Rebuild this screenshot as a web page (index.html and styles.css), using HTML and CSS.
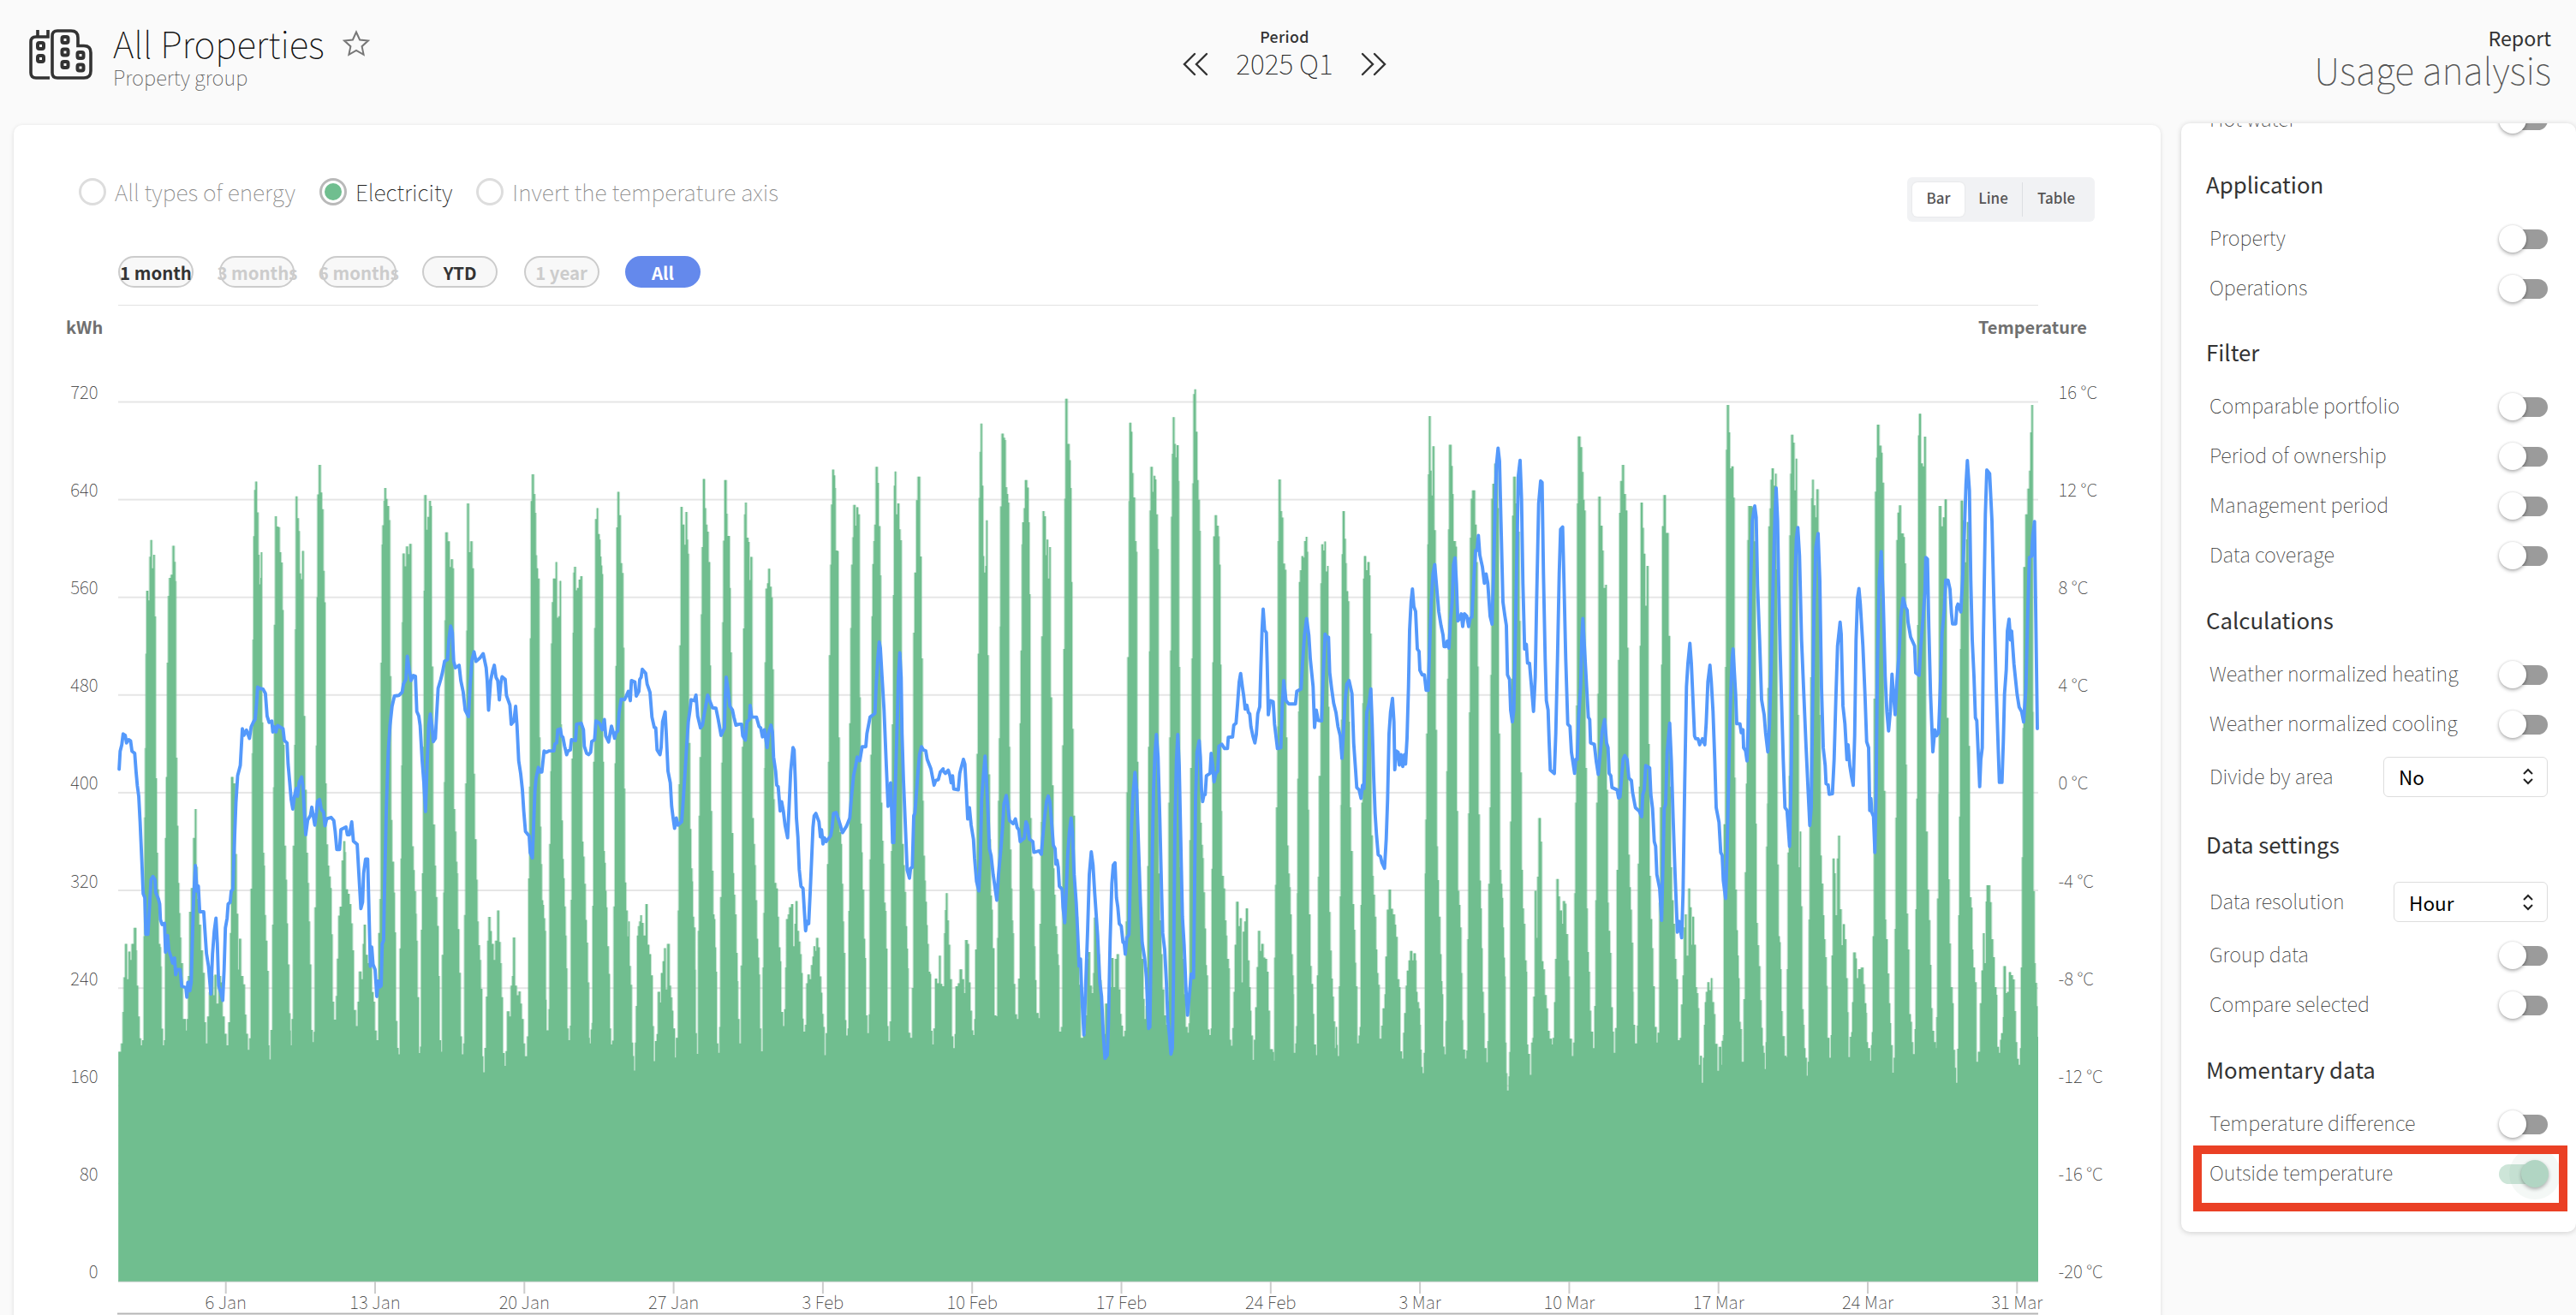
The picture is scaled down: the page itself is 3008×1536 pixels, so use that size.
FILE: index.html
```html
<!DOCTYPE html>
<html lang="en">
<head>
<meta charset="utf-8">
<title>Usage analysis</title>
<link rel="stylesheet" href="styles.css">
</head>
<body>
<header class="topbar">
  <div class="brand">
    <svg class="brand-icon" viewBox="0 0 74 60" fill="none" stroke="#333" stroke-width="3.6">
      <path d="M24 58H8q-6 0-6-6V16q0-6 6-6h14V2M10 9V2"/>
      <path d="M33 3h16q8 0 8 8v9.500h7q8 0 8 8v21.500q0 8-8 8H33q-6 0-6-6V9q0-6 6-6z"/>
      <g stroke-width="4"><rect x="10" y="17" width="7" height="7" rx="2"/><rect x="10" y="32" width="7" height="7" rx="2"/><rect x="38.500" y="10" width="7" height="7" rx="2"/><rect x="38.500" y="24.500" width="7" height="7" rx="2"/><rect x="38.500" y="39" width="7" height="7" rx="2"/><rect x="56.500" y="28" width="7" height="7" rx="2"/><rect x="56.500" y="42.500" width="7" height="7" rx="2"/></g>
    </svg>
    <div>
      <div class="title-row"><h1 class="title">All Properties</h1>
        <svg class="star" viewBox="0 0 32 32" fill="none" stroke="#777" stroke-width="2"><path d="M16 2.500l4.100 9 9.700 1.100-7.200 6.600 2 9.700-8.600-4.900-8.600 4.900 2-9.700-7.200-6.600 9.700-1.100z"/></svg>
      </div>
      <div class="subtitle">Property group</div>
    </div>
  </div>
  <div class="period">
    <div class="period-label">Period</div>
    <div class="period-row">
      <svg class="chev" viewBox="0 0 30 28"><path d="M14 2L2 14l12 12M28 2L16 14l12 12"/></svg>
      <span class="period-value">2025 Q1</span>
      <svg class="chev" viewBox="0 0 30 28"><path d="M2 2l12 12L2 26M16 2l12 12-12 12"/></svg>
    </div>
  </div>
  <div class="report">
    <div class="report-label">Report</div>
    <div class="report-name">Usage analysis</div>
  </div>
</header>
<main class="content">
  <section class="card">
    <div class="options">
      <div class="radios">
        <label class="radio"><i class="dot"></i><span>All types of energy</span></label>
        <label class="radio checked"><i class="dot"></i><span>Electricity</span></label>
        <label class="radio"><i class="dot"></i><span>Invert the temperature axis</span></label>
      </div>
      <div class="views"><span class="view active">Bar</span><span class="view line">Line</span><span class="view table">Table</span></div>
    </div>
    <div class="ranges">
      <span class="range">1 month</span><span class="range off">3 months</span><span class="range off">6 months</span><span class="range">YTD</span><span class="range off">1 year</span><span class="range on">All</span>
    </div>
    <svg class="chart" id="chart" viewBox="16 356 2507 1180" width="2507" height="1180">
      <rect x="138" y="355" width="2242" height="2" fill="#e2e2e2"/>
      <g id="grid"></g>
      <path id="fringe" fill="#70be8f" opacity=".42"/>
      <path id="bars" fill="#70be8f"/>
      <path id="temp" fill="none" stroke="#5499fb" stroke-width="3.900" stroke-linejoin="round" stroke-linecap="round"/>
      <g id="labels"></g>
      <text class="axis-title" x="77" y="390">kWh</text>
      <text class="axis-title" x="2437" y="390" text-anchor="end">Temperature</text>
      <rect x="137" y="1533.500" width="2243" height="2" fill="#b5b5b5"/>
    </svg>
  </section>
  <aside class="settings">
    <div class="scroll">
      <div class="row"><span>Hot water</span><i class="toggle"></i></div>
      <h2 class="group">Application</h2>
      <div class="row"><span>Property</span><i class="toggle"></i></div>
      <div class="row"><span>Operations</span><i class="toggle"></i></div>
      <h2 class="group">Filter</h2>
      <div class="row"><span>Comparable portfolio</span><i class="toggle"></i></div>
      <div class="row"><span>Period of ownership</span><i class="toggle"></i></div>
      <div class="row"><span>Management period</span><i class="toggle"></i></div>
      <div class="row"><span>Data coverage</span><i class="toggle"></i></div>
      <h2 class="group">Calculations</h2>
      <div class="row"><span>Weather normalized heating</span><i class="toggle"></i></div>
      <div class="row"><span>Weather normalized cooling</span><i class="toggle"></i></div>
      <div class="row tall"><span>Divide by area</span><div class="select wide">No<svg class="updown" viewBox="0 0 12 18"><path d="M1 6l5-5 5 5M1 12l5 5 5-5"/></svg></div></div>
      <h2 class="group">Data settings</h2>
      <div class="row tall"><span>Data resolution</span><div class="select">Hour<svg class="updown" viewBox="0 0 12 18"><path d="M1 6l5-5 5 5M1 12l5 5 5-5"/></svg></div></div>
      <div class="row"><span>Group data</span><i class="toggle"></i></div>
      <div class="row"><span>Compare selected</span><i class="toggle"></i></div>
      <h2 class="group">Momentary data</h2>
      <div class="row"><span>Temperature difference</span><i class="toggle"></i></div>
      <div class="row marked"><span>Outside temperature</span><i class="toggle on"></i></div>
    </div>
  </aside>
</main>
<script src="chart.js"></script>
</body>
</html>
```
FILE: styles.css
```css
*, *::before, *::after { box-sizing: border-box; }
body {
  margin: 0;
  width: 3008px;
  height: 1536px;
  overflow: hidden;
  background: #fafafa;
  color: #333;
  font-family: "Noto Sans CJK SC", "Noto Sans", sans-serif;
  font-weight: 100;
}
h1, h2 { margin: 0; font-weight: inherit; }

.topbar { height: 144px; display: grid; grid-template-columns: 1fr 1fr 1fr; }
.brand { display: flex; gap: 24px; padding: 33px 0 0 34px; }
.brand-icon { width: 74px; height: 60px; }
.title-row { display: flex; align-items: center; gap: 21px; height: 40px; margin-top: -2px; }
.title { font-size: 42.4px; line-height: 40px; color: #111; margin-top: -2px; }
.star { width: 32px; height: 32px; }
.subtitle { font-size: 23.8px; line-height: 37px; color: #555; }
.period { display: flex; flex-direction: column; align-items: center; padding: 26px 0 0 0; margin-left: -8px; }
.period-label { font-size: 17.8px; line-height: 32px; font-weight: 500; letter-spacing: .3px; }
.period-row { display: flex; align-items: center; justify-content: space-between; width: 238px; height: 34px; }
.period-value { font-size: 32px; line-height: 34px; color: #222; margin-top: -4px; }
.chev { width: 30px; height: 28px; fill: none; stroke: #333; stroke-width: 2.4; stroke-linecap: round; }
.report { text-align: right; padding: 26px 29px 0 0; }
.report-label { font-size: 23.2px; line-height: 36px; font-weight: 400; }
.report-name { font-size: 43px; line-height: 36px; color: #555; }

.content { display: flex; align-items: flex-start; padding-left: 16px; gap: 24px; }
.card {
  width: 2507px; height: 1400px; margin-top: 2px;
  background: #fff; border-radius: 10px;
  box-shadow: 0 1px 5px rgba(0, 0, 0, .13);
}
.options { display: flex; justify-content: space-between; padding: 61px 77px 0 76px; height: 153px; }
.radios { display: flex; height: 34px; align-items: center; gap: 28px; }
.radio { display: flex; align-items: center; gap: 10px; font-size: 26.5px; line-height: 34px; color: #888; white-space: nowrap; }
.dot { width: 32px; height: 32px; border: 3px solid #ddd; border-radius: 50%; padding: 3px; }
.checked { color: #222; }
.checked .dot { border-color: #b9b9b9; }
.checked .dot::before { content: ""; display: block; width: 20px; height: 20px; border-radius: 50%; background: #70be8f; }
.views { display: flex; width: 219px; height: 52px; padding: 6px; border-radius: 6px; background: #f1f2f4; font-size: 17px; line-height: 36px; font-weight: 500; color: #555; }
.view { display: flex; justify-content: center; width: 61px; height: 40px; }
.view.active { background: #fff; border-radius: 6px; box-shadow: 0 0 3px rgba(0, 0, 0, .08); }
.view.line { width: 68px; border-right: 1px solid #dcdee2; }
.view.table { width: 78px; }
.ranges { display: flex; gap: 30.4px; padding-left: 122px; height: 57px; }
.range {
  display: flex; align-items: center; justify-content: center;
  width: 88px; height: 37px; border: 2px solid #ccc; border-radius: 19px;
  background: #f8f8f8; font-size: 20.4px; font-weight: 700; white-space: nowrap; color: #333;
}
.off { color: #ccc; }
.range.on { background: #6489ec; border-color: #6489ec; color: #fff; }
.chart { display: block; }
.axis { font-size: 20.6px; fill: #333; }
.axis-title { font-size: 20px; font-weight: 700; fill: #707070; }

.settings {
  width: 461px; height: 1295px; overflow: hidden; position: relative;
  background: #fff; border-radius: 10px; box-shadow: 0 1px 6px rgba(0, 0, 0, .18);
}
.scroll { margin-top: -33.500px; }
.row { display: flex; justify-content: space-between; align-items: center; height: 58px; padding: 0 33px 0 33px; font-size: 23.5px; color: #333; white-space: nowrap; }
.row > span { padding-bottom: 3px; }
.row.tall { height: 66px; }
.group { height: 80.500px; padding: 28px 0 0 29px; font-size: 25.8px; line-height: 36px; font-weight: 400; }
.toggle { position: relative; width: 55px; height: 23px; border-radius: 12px; background: #9b9b9b; margin-top: 2px; }
.toggle::before {
  content: ""; position: absolute; left: -2px; top: -5px; width: 32px; height: 32px; border-radius: 50%;
  background: #fff; box-shadow: 0 2px 4px rgba(0, 0, 0, .3), 0 0 3px rgba(0, 0, 0, .12);
}
.toggle.on { width: 57px; background: #cde5d8; }
.toggle.on::before { left: 26px; background: #b1d5c3; box-shadow: 0 2px 4px rgba(0, 0, 0, .3), 0 0 0 14px rgba(112, 170, 143, .08); }
.marked { position: relative; }
.marked::after { content: ""; position: absolute; left: 14px; top: -3px; width: 437px; height: 77px; border: 10px solid #ea4025; }
.select { display: flex; align-items: center; justify-content: space-between; width: 180px; height: 47px; padding: 0 16px 0 17px; border: 1px solid #ddd; border-radius: 6px; font-size: 22.5px; font-weight: 400; color: #000; }
.select.wide { width: 192px; }
.updown { width: 12px; height: 18px; fill: none; stroke: #222; stroke-width: 2; overflow: visible; }
```
FILE: chart.js
```js
// its samples are position/level pairs in that unit.
const segments = [
  { o: [60, 360], s: [2.529, 1.3333],
    bars: `198 1158 206 1145 211 1096 214 1042 218 990 223 1045 228 1002 233 1015 237 990 244 965 250 1000 252 1055 256 1103 260 1137 264 1148 268 1140 273 978 275 793 277 685 279 538 281 440 286 455 290 387 293 361 297 405 301 384 305 480 308 732 311 848 314 905 317 990 321 995 323 1025 325 1122 329 1148 333 1140 336 825 339 730 342 552 345 448 348 420 353 415 358 370 363 395 366 425 368 700 371 806 374 895 377 942 380 980 383 1020 388 1107 397 1125 400 1107 404 1040 408 940 413 903 419 825 424 780 428 870 431 920 436 960 441 1000 447 1035 452 1112 456 1145 461 1103 466 1065 470 1040 478 1070 482 1038 487 1083 494 1040 500 1050 505 1103 511 1130 517 1148 523 1112 528 973 531 730 537 740 543 850 547 943 551 1030 554 982 560 1040 566 1053 571 1100 575 1130 580 1155 585 1137 589 904 593 693 595 516 597 355 600 283 603 270 607 318 611 384 614 430 617 420 619 380 622 645 625 848 628 868 630 945 633 985 637 1032 641 1148 644 1170 648 1124 653 960 656 746 658 493 661 324 665 340 670 341 674 380 678 396 682 470 685 680 688 837 692 890 695 958 698 1022 702 1098 705 1125 707 1148 710 1107 714 837 718 680 720 500 722 293 726 327 730 347 733 413 737 422 741 378 745 635 749 750 753 848 757 895 760 955 763 1022 767 1124 771 1143 775 1127 778 933 782 681 784 450 786 290 790 244 795 287 799 313 803 409 806 458 809 740 812 835 816 868 820 885 824 903 827 975 830 1080 834 1108 841 1071 844 1013 848 946 852 932 858 860 863 830 867 847 869 905 875 912 880 928 885 958 889 1000 893 1093 899 1118 905 1080 909 1033 915 1045 920 990 923 960 928 1007 934 1020 940 1018 946 1065 951 1080 955 1125 960 1140 966 973 970 920 973 552 976 368 978 338 982 300 984 280 988 297 992 308 997 330 1000 573 1003 797 1006 862 1011 910 1014 972 1017 1110 1021 1152 1025 1162 1029 997 1032 857 1034 712 1036 489 1038 382 1043 402 1048 371 1053 383 1058 367 1063 570 1065 838 1069 875 1072 908 1076 943 1078 985 1081 1073 1085 1160 1089 1150 1092 968 1095 880 1098 683 1100 440 1102 291 1107 345 1111 325 1116 300 1120 308 1123 558 1127 804 1132 868 1135 917 1139 962 1143 1040 1146 1140 1151 1158 1154 1007 1158 910 1160 738 1162 486 1164 349 1170 363 1176 403 1180 391 1185 405 1188 780 1192 815 1195 862 1198 880 1200 967 1204 1035 1208 1134 1212 1162 1217 1145 1220 945 1223 740 1226 502 1228 304 1233 380 1238 363 1243 405 1247 725 1250 827 1255 890 1258 955 1261 992 1265 1015 1268 1060 1272 1165 1275 1190 1280 1152 1284 1072 1288 985 1291 948 1296 970 1300 990 1306 1015 1311 985 1317 938 1322 987 1326 1020 1329 1073 1333 1160 1338 1180 1342 1157 1346 1095 1352 1103 1357 1055 1361 1040 1364 980 1369 1055 1374 1070 1380 1064 1385 1083 1389 1107 1394 1145 1398 1165 1405 1134 1409 888 1412 745 1414 514`,
    temp: `200 718 203 690 208 680 212 663 218 665 222 677 228 672 234 674 238 690 246 693 250 722 254 744 258 760 262 800 267 860 271 912 276 918 279 975 285 975 289 940 294 890 300 885 306 890 308 910 316 920 320 928 322 952 327 960 334 958 337 1003 343 977 347 1000 353 1010 358 1020 364 1012 367 1038 371 1030 380 1030 385 1056 397 1058 400 1073 403 1050 407 1050 409 1063 413 1050 416 990 420 920 425 868 430 908 434 900 438 940 450 940 453 965 458 1005 464 1025 471 1068 476 1005 481 970 486 950 490 990 494 1055 500 1065 506 1078 510 1030 514 965 519 950 522 928 528 925 531 908 536 905 540 840 545 770 550 728 558 712 564 655 569 665 576 657 585 670 590 652 596 645 602 640 606 615 609 590 614 592 625 593 632 600 637 635 643 645 651 643 654 660 658 652 663 660 668 650 684 655 688 673 696 677 699 710 704 740 708 765 713 780 718 760 723 748 727 760 732 738 739 730 743 745 747 785 751 820 757 797 765 790 769 777 773 790 778 805 783 785 786 768 792 765 797 780 804 785 808 806 813 795 826 793 834 798 838 815 843 843 851 843 855 812 870 808 874 820 880 820 887 800 892 830 903 835 908 880 914 935 919 925 922 880 928 858 934 858 937 920 942 1025 946 995 950 1022 956 1030 961 1072 965 1048 970 1057 974 1055 977 990 981 985 984 900 989 780 995 690 1000 650 1006 620 1013 604 1026 603 1036 598 1040 585 1047 578 1051 542 1056 560 1062 580 1069 572 1075 573 1079 628 1085 635 1089 650 1095 705 1100 740 1105 784 1109 720 1114 650 1119 632 1124 650 1128 675 1134 670 1138 630 1142 592 1150 578 1155 567 1161 550 1170 547 1174 515 1179 495 1184 505 1188 550 1193 560 1204 556 1209 580 1216 597 1222 626 1232 636 1237 585 1242 548 1248 535 1254 550 1265 545 1275 538 1284 560 1287 580 1291 626 1297 580 1303 565 1308 556 1313 575 1318 580 1323 610 1327 585 1331 574 1340 578 1344 603 1354 618 1358 648 1366 643 1371 620 1375 650 1380 705 1386 725 1391 750 1395 783 1400 815 1411 822 1414 848` },
  { o: [620, 440], s: [3, 1.8233],
    bars: `0 265 4 208 10 250 14 290 17 380 20 408 24 430 29 768 32 958 35 1038 38 1115 42 1125 45 1153 49 1180 52 1327 54 1392 62 1347 65 995 69 840 71 568 74 480 78 430 87 395 91 513 97 510 101 435 105 740 107 945 111 1027 114 1068 117 1128 121 1190 124 1260 127 1388 131 1413 137 1382 140 1114 143 813 147 545 149 417 152 405 157 455 162 450 168 432 174 425 179 990 183 1022 187 1080 191 1157 195 1205 199 1290 203 1408 206 1420 210 1390 214 1376 216 1127 219 820 223 535 226 303 231 280 235 335 240 347 243 383 246 402 249 420 252 820 255 1010 258 1035 261 1095 264 1130 267 1213 272 1272 276 1388 280 1422 285 1414 290 1128 294 823 297 616 300 321 304 245 309 295 314 397 319 418 323 577 326 877 329 1077 333 1137 338 1192 341 1160 345 1255 349 1295 353 1418 357 1447 361 1478 365 1418 368 1340 372 1190 376 1170 380 1160 384 1147 388 1163 394 1190 402 1123 408 1210 414 1230 420 1275 426 1383 430 1458 435 1415 441 1400 445 1310 452 1333 456 1270 462 1245 467 1217 472 1305 478 1208 485 1297 490 1322 494 1350 498 1388 504 1450 508 1408 515 1137 518 868 521 572 525 277 530 315 537 358 542 288 547 347 550 377 553 780 557 963 561 1047 565 1075 567 1150 571 1173 575 1263 577 1398 581 1442 586 1180 589 935 592 810 596 506 599 363 603 218 609 280 613 315 617 330 622 395 627 615 630 925 634 1052 638 1145 642 1155 645 1215 648 1267 651 1420 656 1440 661 1385 664 1108 668 822 671 523 674 349 678 220 685 292 688 339 696 450 699 587 703 972 708 1057 711 1103 715 1145 719 1227 723 1287 725 1368 730 1420 736 1254 740 788 744 536 748 293 751 268 755 343 761 352 765 433 769 384 775 940 780 995 784 1040 787 1115 791 1197 795 1237 799 1273 802 1388 806 1437 812 1258 815 1142 818 833 820 608 823 451 828 440 832 409 837 447 842 470 846 623 850 900 853 1078 859 1090 864 1150 868 1215 873 1245 876 1353 883 1383 888 1347 892 1258 895 1155 901 1145 905 1130 912 1123 918 1213 924 1165 928 1117 933 1180 938 1203 943 1230 947 1270 951 1367 954 1395 961 1380 965 1292 970 1273 976 1283 982 1253 987 1235 991 1213 996 1223 1000 1195 1006 1215 1011 1277 1016 1312 1020 1357 1024 1385 1028 1445 1033 1398 1038 1038 1042 820 1045 593 1049 400 1052 272 1056 198 1061 210 1065 237 1067 370 1075 372 1077 768 1081 970 1086 995 1089 1080 1093 1160 1096 1227 1100 1370 1104 1403 1110 1388 1113 1138 1116 738 1120 535 1123 400 1127 342 1130 273 1136 317 1140 278 1146 293 1151 683 1154 952 1158 1013 1161 1092 1166 1197 1170 1238 1173 1360 1178 1398 1184 1358 1187 1028 1190 805 1194 510 1197 399 1201 350 1204 315 1208 192 1214 226 1218 318 1223 423 1226 907 1230 988 1234 1037 1237 1120 1241 1138 1244 1218 1248 1383 1252 1415 1258 1373 1262 1010 1265 740 1269 465 1272 232 1275 202 1279 293 1284 270 1290 325 1294 348 1298 760 1300 995 1305 1040 1309 1097 1313 1170 1317 1218 1320 1260 1322 1397 1328 1408 1336 1302 1340 545 1344 417 1350 263 1355 213 1363 383 1368 600 1372 903 1375 1020 1379 1073 1382 1118 1386 1168 1389 1208 1393 1267 1398 1272 1401 1393 1406 1422 1411 1388 1416 1282 1422 1292 1430 1233 1435 1293`,
    temp: `5 1025 9 960 14 880 18 855 26 832 32 842 38 842 46 797 54 800 64 797 80 797 84 782 90 780 94 752 103 750 107 765 112 768 118 787 125 805 130 797 138 795 142 773 156 775 160 740 176 738 184 752 187 787 195 802 202 805 209 800 213 777 223 773 228 733 240 738 250 752 257 730 262 765 272 778 282 744 288 757 293 770 298 758 304 755 309 715 316 687 328 688 334 680 341 670 348 690 352 647 364 650 369 680 378 670 381 645 386 640 390 623 402 632 407 655 417 672 424 725 432 747 437 748 442 795 452 805 456 790 461 735 470 714 474 760 480 840 488 865 493 915 498 940 503 962 509 940 515 955 528 948 533 905 539 850 545 790 551 735 557 710 561 688 572 690 578 678 584 723 594 748 601 742 608 715 619 678 626 690 636 705 648 706 656 730 666 764 678 748 680 690 684 640 690 665 697 702 706 710 711 725 718 742 730 740 738 740 742 765 751 774 757 735 765 730 768 700 773 725 790 725 799 745 805 748 811 767 818 752 827 790 833 757 841 742 846 757 850 810 857 840 861 870 866 873 873 925 878 905 884 925 890 955 899 982 904 920 910 840 918 790 922 795 926 860 930 940 935 980 940 1050 946 1085 953 1090 957 1130 962 1180 967 1160 973 1165 978 1100 983 1030 988 960 992 935 998 930 1009 948 1014 980 1018 965 1023 995 1028 982 1034 990 1050 978 1055 960 1060 930 1069 928 1077 942 1085 958 1091 971 1105 958 1117 940 1122 900 1130 850 1137 830 1143 810 1152 818 1160 788 1173 788 1177 760 1188 725 1205 717 1209 660 1215 600 1220 565 1224 578 1230 640 1237 710 1245 830 1251 915 1255 895 1260 865 1264 930 1267 992 1271 992 1275 900 1282 760 1287 640 1292 588 1297 640 1300 760 1305 860 1312 960 1318 1050 1326 1068 1330 1047 1336 1045 1341 935 1345 930 1350 890 1356 840 1361 805 1368 788 1375 795 1383 797 1388 815 1401 835 1412 870 1418 860 1427 858 1434 842 1444 835` },
  { o: [1100, 440], s: [3, 1.8233],
    bars: `0 1298 8 1185 11 1136 14 1100 19 1158 23 1210 28 1283 34 1405 39 1430 45 1400 48 1298 56 1292 62 1262 70 1283 77 1313 82 1200 89 1208 94 1290 99 1350 104 1392 109 1402 114 1368 117 1220 122 803 126 590 130 258 133 160 136 100 140 232 144 382 147 417 152 403 155 306 159 593 163 847 167 985 170 1105 174 1135 177 1217 183 1360 190 1362 194 1195 197 903 200 770 203 532 205 276 209 121 215 130 220 135 223 235 227 250 231 268 235 788 238 1007 242 1090 245 1158 248 1185 251 1293 256 1358 262 1368 268 1282 273 738 276 583 280 357 282 310 287 280 291 220 298 236 303 310 306 463 309 940 313 1022 316 1090 320 1095 323 1213 326 1285 330 1355 338 1366 343 1165 347 948 349 553 353 286 358 297 363 380 366 347 371 430 376 363 380 683 385 870 390 1047 393 1103 397 1170 401 1187 404 1230 407 1253 410 1395 418 1385 422 785 426 580 430 260 433 47 439 143 446 178 450 237 453 437 456 750 460 935 465 1100 470 1150 475 1220 480 1295 485 1408 495 1400 503 1360 508 1240 513 1225 518 1297 524 1313 530 1270 533 1152 540 1180 546 1230 552 1285 558 1380 565 1400 572 1335 580 1342 588 1300 593 1238 600 1300 607 1240 613 1230 619 1305 624 1357 628 1382 633 1405 640 1393 644 1160 647 885 650 597 655 265 657 98 662 117 666 205 670 257 676 350 680 373 683 820 687 1045 693 1130 699 1240 705 1325 709 1368 714 1340 718 1258 720 1042 723 788 726 585 728 285 731 192 737 245 741 211 746 219 750 293 755 367 758 1058 763 1158 768 1230 772 1305 778 1360 785 1380 790 1330 794 907 797 768 800 583 803 298 806 164 809 86 814 143 818 172 822 146 828 222 830 618 833 1045 838 1120 843 1240 848 1315 853 1385 860 1397 865 1377 868 987 871 833 875 600 878 227 881 37 885 27 889 117 894 220 898 262 902 328 905 950 909 997 913 1025 916 1098 920 1175 924 1253 927 1275 931 1390 936 1402 942 1388 945 1048 948 608 951 340 956 295 962 317 968 340 971 400 975 613 978 925 980 1063 986 1090 991 1158 995 1190 998 1240 1004 1260 1007 1412 1012 1425 1018 1387 1022 1310 1026 1210 1031 1118 1038 1170 1044 1153 1049 1290 1054 1182 1060 1160 1065 1132 1071 1243 1076 1300 1080 1350 1083 1403 1088 1455 1093 1412 1098 1343 1103 1257 1108 1180 1114 1223 1119 1208 1126 1237 1132 1240 1138 1267 1143 1350 1148 1432 1158 1438 1163 1457 1165 1237 1168 1082 1171 917 1175 745 1177 350 1180 219 1186 286 1190 300 1195 398 1201 411 1205 768 1209 998 1213 1058 1217 1087 1220 1145 1224 1230 1228 1275 1231 1315 1232 1440 1238 1420 1241 1383 1244 1100 1246 856 1249 713 1251 437 1255 412 1260 382 1265 385 1270 350 1275 341 1279 373 1282 922 1285 1145 1290 1255 1294 1293 1299 1357 1303 1422 1310 1445 1314 1275 1318 1065 1321 850 1327 440 1330 357 1335 370 1340 351 1344 415`,
    temp: `2 838 12 845 22 838 28 850 32 865 37 850 41 878 57 880 62 845 67 833 75 815 80 825 85 880 90 942 96 918 102 955 110 985 114 1025 121 1075 129 1095 134 1030 139 900 145 850 151 808 156 860 161 930 166 1005 172 1020 179 1060 192 1115 198 1060 207 1000 212 960 217 910 225 892 230 912 236 945 249 952 257 942 263 960 269 965 274 990 288 983 294 948 299 955 306 985 318 990 322 1013 340 1010 348 1017 353 980 361 930 366 905 372 893 378 905 384 950 390 998 396 1005 399 1038 403 1030 407 1045 411 1085 421 1092 424 1130 430 1163 435 1100 440 1020 446 970 452 940 457 970 463 1060 470 1120 475 1180 480 1255 485 1240 490 1320 497 1402 503 1300 510 1180 516 1060 523 1012 529 1040 535 1100 545 1190 553 1290 559 1320 565 1400 571 1452 579 1445 583 1380 589 1200 595 1080 600 1040 606 1035 611 1110 616 1130 621 1165 628 1170 634 1205 638 1205 642 1230 647 1195 655 1188 659 1080 664 960 669 890 676 843 682 880 688 990 695 1120 701 1205 710 1240 716 1280 720 1340 724 1388 728 1385 733 1200 737 1000 741 880 746 800 751 762 757 810 763 940 769 1090 773 1185 780 1220 786 1290 791 1370 797 1405 802 1443 807 1430 811 1280 816 950 821 820 826 762 831 830 836 980 842 1150 848 1210 855 1310 860 1360 866 1320 873 1272 881 1280 884 1130 888 900 893 800 901 775 905 810 909 880 913 905 917 892 922 890 926 850 939 845 943 802 948 825 953 863 959 845 966 840 970 787 980 783 990 792 1000 792 1003 768 1018 767 1022 742 1030 738 1035 700 1041 650 1046 632 1052 660 1057 680 1062 708 1068 700 1073 715 1078 718 1082 745 1089 765 1096 780 1101 762 1106 718 1113 703 1117 620 1121 540 1125 495 1130 540 1136 545 1139 610 1143 720 1150 690 1160 692 1165 740 1175 792 1187 790 1192 700 1197 647 1205 690 1215 697 1238 697 1243 670 1258 665 1263 610 1270 550 1277 515 1285 550 1290 600 1300 660 1305 747 1311 710 1318 732 1330 733 1335 640 1342 548 1349 558` },
  { o: [1550, 440], s: [3, 1.8233],
    bars: `0 403 3 703 6 1140 10 1222 14 1282 18 1320 22 1373 26 1430 29 1385 33 1423 36 1447 41 1298 44 1107 47 912 49 730 51 378 54 286 60 345 64 397 67 457 72 478 76 735 78 917 82 1010 88 1123 93 1178 97 1248 100 1298 104 1420 110 1403 114 1385 117 1125 120 907 124 695 126 430 129 382 135 412 141 395 147 423 150 547 154 977 158 1063 161 1103 166 1150 170 1220 174 1270 178 1295 182 1410 190 1382 194 1345 201 1315 204 1235 209 1135 215 1092 222 1133 229 1145 236 1167 240 1193 245 1283 251 1300 255 1437 261 1452 266 1397 270 1355 275 1297 279 1265 285 1243 290 1223 297 1243 302 1228 309 1243 311 1310 315 1332 320 1345 324 1380 326 1433 329 1470 333 1483 338 1440 342 1058 344 943 347 760 351 357 353 208 356 84 361 200 365 253 369 148 374 327 379 752 383 1000 386 1072 390 1150 395 1230 399 1287 402 1315 405 1427 410 1443 415 1372 418 840 421 643 424 325 427 145 434 190 438 250 441 350 449 362 453 925 457 1095 461 1125 465 1173 469 1270 472 1370 475 1433 482 1452 487 1435 491 1198 494 930 497 715 500 343 503 260 508 242 517 315 522 395 526 617 529 932 533 1073 537 1132 540 1217 543 1310 547 1355 550 1430 557 1460 562 1415 565 1080 569 917 572 635 575 260 579 228 586 185 592 183 597 280 600 760 604 1050 608 1080 612 1110 615 1173 618 1237 621 1277 623 1418 626 1483 629 1520 635 1490 638 1438 641 947 645 643 648 296 652 213 659 270 663 290 668 330 673 520 676 843 680 1050 684 1132 688 1165 692 1243 697 1267 699 1422 703 1442 709 1487 715 1418 719 1408 722 1320 727 1095 733 1195 736 1065 740 940 747 990 751 1245 756 1262 761 1317 767 1345 772 1393 778 1410 786 1422 790 1408 795 1332 799 1240 803 1070 809 1107 814 1137 822 1165 826 1117 832 1122 836 1187 842 1243 845 1277 848 1410 856 1447 862 1418 866 1100 869 907 872 700 875 270 878 127 886 150 892 203 896 262 900 285 904 833 908 1132 911 1225 915 1267 919 1350 923 1395 930 1430 936 1340 940 1115 943 907 947 675 950 255 956 317 963 370 967 450 974 443 978 880 982 1120 985 1180 990 1227 994 1343 999 1395 1003 1440 1009 1387 1014 1050 1019 603 1023 290 1027 222 1033 188 1039 250 1045 285 1050 577 1054 1018 1058 1087 1062 1135 1066 1205 1070 1310 1072 1380 1077 1420 1085 1382 1088 1037 1092 873 1095 573 1098 268 1104 322 1108 377 1113 488 1119 403 1124 782 1128 1063 1132 1155 1137 1217 1141 1298 1146 1385 1153 1418 1157 1397 1163 1120 1166 917 1170 613 1173 318 1178 252 1185 333 1195 552 1200 873 1203 1045 1207 1115 1212 1165 1217 1240 1222 1283 1227 1413 1235 1408 1240 1337 1245 1275 1249 1173 1253 1145 1258 1233 1265 1090 1270 1130 1275 1210 1278 1150 1284 1210`,
    temp: `4 555 8 630 15 665 22 695 30 715 37 745 45 765 51 813 56 760 62 690 68 655 76 647 86 675 92 780 99 840 103 875 111 880 118 898 123 870 128 877 133 800 138 715 146 695 152 665 157 740 162 850 167 930 172 975 178 1018 186 1022 191 1035 200 1047 206 985 211 900 216 760 221 715 228 685 233 735 236 837 241 797 248 800 252 827 258 805 264 830 270 805 274 825 279 770 284 660 288 540 293 480 298 452 303 490 309 500 315 580 321 585 324 625 332 635 340 635 346 668 353 668 359 560 364 480 370 420 376 400 383 450 390 500 398 530 405 550 409 575 415 575 420 563 426 578 431 520 437 480 442 400 447 386 452 440 457 520 464 515 469 505 474 532 480 505 488 510 495 532 500 515 506 512 512 440 519 370 524 370 529 338 534 380 543 405 550 440 556 420 562 440 570 510 577 527 582 420 587 290 592 190 598 152 603 180 608 310 615 480 622 510 627 530 631 635 638 645 642 710 648 735 653 710 657 600 663 400 669 210 675 178 680 260 685 440 691 580 697 570 701 610 708 610 715 660 722 713 728 640 733 480 740 270 747 222 752 225 757 420 763 600 767 690 773 710 777 780 781 838 795 845 800 760 806 600 812 420 817 325 824 320 829 440 835 600 842 740 850 745 855 800 866 845 870 815 875 815 880 730 887 660 891 560 895 515 901 580 908 660 914 725 919 730 922 780 935 783 942 820 949 847 956 800 963 755 971 730 978 780 983 790 987 845 993 850 997 875 1015 880 1020 897 1025 895 1030 860 1036 815 1042 807 1050 815 1056 855 1065 860 1069 885 1079 918 1092 925 1101 937 1105 890 1110 880 1115 828 1129 833 1133 890 1139 920 1145 990 1150 1000 1154 1060 1164 1090 1171 1158 1175 1050 1180 920 1185 910 1190 800 1199 738 1205 820 1211 940 1218 1060 1226 1183 1232 1160 1241 1195 1246 1100 1252 860 1258 660 1263 610 1270 568 1275 610 1280 680 1286 765` },
  { o: [1980, 440], s: [3, 1.4307],
    bars: `0 1020 4 1030 8 1055 11 1150 16 1135 21 1180 26 1138 30 1083 33 1045 37 1028 42 1012 47 1025 54 1005 58 1045 64 1065 68 1115 76 1160 82 1120 90 1150 92 1110 97 1100 99 748 104 485 107 122 110 47 116 93 120 153 126 150 132 202 136 670 139 857 143 925 147 967 150 1005 153 1078 157 1090 161 1145 169 1040 173 828 177 680 180 538 182 273 185 216 197 218 205 275 210 747 213 913 217 950 221 985 226 1042 230 1088 234 1118 238 1130 242 1157 246 1112 248 785 251 713 253 520 256 250 260 220 263 172 267 153 273 182 279 162 283 322 286 815 290 935 294 945 297 990 300 1060 304 1102 311 1135 318 1137 320 990 323 795 327 667 329 265 332 162 335 97 341 110 346 190 351 137 355 287 358 565 361 820 365 760 369 885 373 1057 377 1083 380 1122 384 1138 389 1168 393 1145 397 907 400 740 403 502 406 203 409 172 413 215 419 235 424 188 430 310 434 565 437 800 441 847 446 900 450 940 454 970 458 1018 461 1105 468 1138 474 1100 477 967 481 805 486 830 490 900 496 805 500 767 505 890 511 950 516 915 522 940 527 1005 532 1062 535 1137 541 1103 546 1095 549 1045 553 962 560 972 564 1005 570 990 580 987 587 1015 592 1047 597 1063 599 1112 603 1122 611 1143 615 1117 618 1095 621 935 625 538 629 192 633 135 636 80 643 115 650 127 654 177 659 692 664 907 667 940 672 997 677 1047 681 1080 684 1117 689 1163 694 1138 698 923 701 737 704 273 708 227 713 215 719 262 728 268 732 312 736 648 739 897 743 957 748 1065 753 1078 757 1112 761 1132 768 1090 771 890 774 705 777 415 780 98 783 62 789 145 795 150 801 100 806 760 812 857 817 908 821 983 825 1055 829 1093 835 1112 842 1122 844 1070 847 872 851 697 853 216 860 250 867 235 873 205 879 570 885 840 889 947 893 1020 899 1047 903 1125 908 1155 912 1180 917 1123 921 900 924 735 927 455 929 207 936 240 943 310 948 272 951 243 956 617 960 870 965 887 969 957 972 987 978 1012 983 1145 990 1128 997 1047 1002 992 1007 930 1012 980 1017 877 1020 850 1031 878 1036 940 1042 970 1047 1020 1053 1033 1056 1120 1062 1130 1067 1108 1071 1097 1077 1070 1079 985 1086 1030 1092 1028 1098 995 1104 1000 1111 1007 1117 1060 1121 1112 1126 1140 1131 1150 1137 1122 1140 987 1144 803 1147 587 1149 318 1156 230 1163 187 1169 157 1173 93 1177 47 1181 560 1183 860 1187 980 1190 1013 1195 1052 1198 1103`,
    temp: `0 605 8 605 14 615 24 605 32 615 37 580 43 510 50 482 55 510 61 560 67 640 72 720 82 745 88 795 93 800 97 842 105 872 110 800 116 660 122 540 128 470 131 455 136 495 140 530 144 580 155 580 160 595 166 590 168 620 175 625 180 642 184 590 188 480 193 340 199 240 207 216 212 235 217 350 224 440 231 540 240 565 245 595 253 627 259 580 265 480 272 330 278 230 282 186 287 240 291 350 296 458 301 540 307 640 313 720 320 725 329 785 334 690 340 500 347 340 353 270 358 252 364 300 371 440 379 530 387 620 394 690 400 750 405 720 409 580 415 380 421 285 429 262 435 340 441 520 447 620 454 650 457 680 464 682 468 698 479 697 485 640 491 540 497 450 506 410 510 430 516 550 523 580 530 640 534 615 540 650 546 668 552 683 557 600 562 440 567 370 572 354 577 380 586 450 593 530 599 610 606 620 610 725 614 705 617 728 623 735 628 795 632 700 637 480 643 340 650 292 657 370 664 500 670 560 676 592 682 560 688 497 693 530 699 565 705 510 713 460 719 400 727 370 735 385 741 390 744 410 753 435 767 450 771 495 783 499 789 450 797 400 803 360 806 302 812 305 817 420 823 530 831 627 838 590 844 600 851 595 857 520 863 430 871 390 876 340 884 340 891 355 896 395 900 413 911 413 915 385 919 380 929 393 935 340 942 250 947 180 952 140 959 190 964 340 969 440 975 500 980 570 985 575 990 630 995 685 999 640 1004 620 1008 440 1015 230 1020 156 1030 162 1038 240 1045 380 1053 520 1060 620 1064 678 1073 678 1078 610 1082 530 1088 490 1092 425 1098 405 1103 440 1107 425 1115 480 1126 530 1133 552 1142 560 1149 577 1157 520 1163 400 1169 302 1177 300 1181 265 1187 242 1191 380 1197 588` }
];

const BASE = 1496.5, LEFT = 138, RIGHT = 2380;

function pairs(seg, key) {
  const n = seg[key].split(' ').map(Number), out = [];
  for (let i = 0; i < n.length; i += 2) {
    out.push([seg.o[0] + n[i] / seg.s[0], seg.o[1] + n[i + 1] / seg.s[1]]);
  }
  return out;
}
const steps = segments.flatMap(s => pairs(s, 'bars'));
const line = segments.flatMap(s => pairs(s, 'temp'));

// Stepped silhouette; each step may be widened on both sides.
function silhouette(grow) {
  let d = '';
  steps.forEach(([x, y], i) => {
    const end = i + 1 < steps.length ? steps[i + 1][0] : RIGHT;
    const a = Math.max(LEFT, x - grow).toFixed(1), b = Math.min(RIGHT, end + grow).toFixed(1);
    d += `M${a} ${BASE}V${y.toFixed(1)}H${b}V${BASE}Z`;
  });
  return d;
}
// Solid part: one closed outline, so that neighbouring hours leave no seam.
let solid = `M${LEFT} ${BASE}`;
steps.forEach(([x, y]) => { solid += `H${x.toFixed(1)}V${y.toFixed(1)}`; });
solid += `H${RIGHT}V${BASE}Z`;
document.getElementById('bars').setAttribute('d', solid);
document.getElementById('fringe').setAttribute('d', silhouette(1.1));
document.getElementById('temp').setAttribute('d', 'M' + line.map(p => p.map(v => v.toFixed(1)).join(' ')).join('L'));

let grid = '', labels = '';
for (let i = 0; i < 10; i++) {
  const y = 469.5 + i * 114.11;
  grid += `<rect x="${LEFT}" y="${(y - 1).toFixed(1)}" width="${RIGHT - LEFT}" height="2" fill="${i === 9 ? '#b9c4bd' : '#e6e6e6'}"/>`;
  labels += `<text class="axis" x="114.5" y="${(y - 3.5).toFixed(1)}" text-anchor="end">${720 - i * 80}</text>`;
  labels += `<text class="axis" x="2403.5" y="${(y - 3.5).toFixed(1)}">${16 - i * 4} °C</text>`;
}
['6 Jan', '13 Jan', '20 Jan', '27 Jan', '3 Feb', '10 Feb', '17 Feb', '24 Feb', '3 Mar', '10 Mar', '17 Mar', '24 Mar', '31 Mar'].forEach((t, i) => {
  const x = (263.7 + i * 174.3).toFixed(1);
  grid += `<rect x="${x - 1}" y="1497" width="2" height="14" fill="#ccc"/>`;
  labels += `<text class="axis" x="${x}" y="1528.5" text-anchor="middle">${t}</text>`;
});
document.getElementById('grid').innerHTML = grid;
document.getElementById('labels').innerHTML = labels;
```
